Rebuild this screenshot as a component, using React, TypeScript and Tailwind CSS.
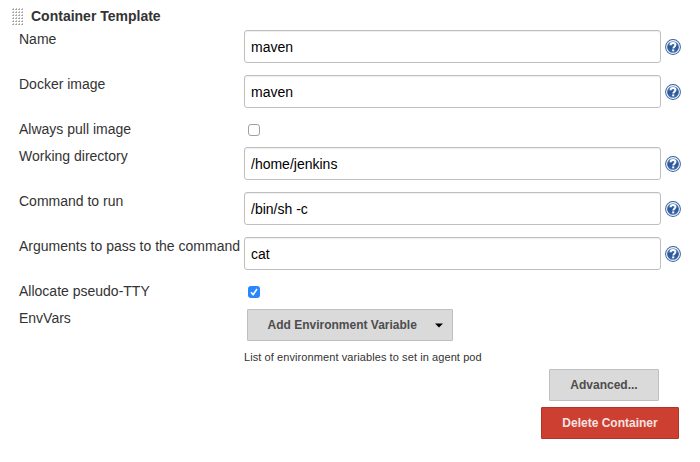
import type { ReactNode } from 'react';

function DragHandle() {
  const cols = [0, 3, 6, 9];
  const rows = [0, 3, 6, 9, 12, 15];
  return (
    <svg width="12" height="18" viewBox="0 0 12 18" shapeRendering="crispEdges" aria-hidden="true">
      {rows.map((y) =>
        cols.map((x) => (
          <g key={`${x}-${y}`}>
            <rect x={x} y={y + 1} width="2" height="1" fill="#b9b7b3" />
            <rect x={x + 1} y={y} width="1" height="1" fill="#c6c4c0" />
            <rect x={x + 1} y={y + 1} width="1" height="1" fill="#a19f9b" />
          </g>
        )),
      )}
    </svg>
  );
}

function HelpIcon() {
  return (
    <svg width="16" height="16" viewBox="0 0 16 16" className="block" role="img" aria-label="Help">
      <defs>
        <linearGradient id="help-fill" x1="0" y1="0" x2="0" y2="1">
          <stop offset="0" stopColor="#6f93c6" />
          <stop offset="0.5" stopColor="#2a5597" />
          <stop offset="1" stopColor="#3d70b4" />
        </linearGradient>
      </defs>
      <circle cx="8" cy="8" r="7.9" fill="#34609f" />
      <circle cx="8" cy="8" r="6.4" fill="url(#help-fill)" stroke="#f2f6fb" strokeWidth="1.1" />
      <path
        d="M5.6 6.3C5.6 4.8 6.6 4 8 4s2.4.8 2.4 2c0 1.6-2.1 1.8-2.1 3.4"
        fill="none"
        stroke="#fff"
        strokeWidth="1.9"
      />
      <rect x="7.2" y="10.4" width="2" height="1.9" fill="#fff" />
    </svg>
  );
}

function Row({ label, tall, children }: { label: string; tall?: boolean; children: ReactNode }) {
  return (
    <div className={`flex items-start pl-[19px] ${tall ? 'h-[45px]' : 'h-[27px]'}`}>
      <div className="w-[225px] shrink-0 whitespace-nowrap text-[14px] leading-[19px]">{label}</div>
      {children}
    </div>
  );
}

function TextRow({ label, value }: { label: string; value: string }) {
  return (
    <Row label={label} tall>
      <input
        type="text"
        aria-label={label}
        defaultValue={value}
        className="block h-[33px] w-[417px] rounded-[3px] border border-[#bfbfbf] bg-white px-[6px] text-[14px] text-black shadow-[inset_0_1px_1px_rgba(0,0,0,0.07)] outline-none"
      />
      <div className="ml-[4px] mt-[9px]">
        <HelpIcon />
      </div>
    </Row>
  );
}

function CheckRow({ label, checked }: { label: string; checked?: boolean }) {
  return (
    <Row label={label}>
      <span
        role="checkbox"
        aria-label={label}
        aria-checked={!!checked}
        className={`ml-[4px] mt-[4px] flex size-[12px] items-center justify-center rounded-[3px] ${
          checked ? 'bg-[#2a87fb]' : 'border border-[#a0a0a0] bg-white'
        }`}
      >
        {checked && (
          <svg width="12" height="12" viewBox="0 0 12 12" fill="none" stroke="#fff" strokeWidth="1.6" aria-hidden="true">
            <path d="M3 6.3 5.1 8.7 9 3" />
          </svg>
        )}
      </span>
    </Row>
  );
}

export default function App() {
  return (
    <div className="h-[462px] w-[700px] overflow-hidden bg-white font-['Liberation_Sans',Arial,sans-serif] text-[#333]">
      <div className="flex h-[30px] items-start pl-[12px] pt-[8px]">
        <DragHandle />
        <h2 className="ml-[7px] -mt-px text-[14px] font-bold leading-[18px]">Container Template</h2>
      </div>
      <TextRow label="Name" value="maven" />
      <TextRow label="Docker image" value="maven" />
      <CheckRow label="Always pull image" />
      <TextRow label="Working directory" value="/home/jenkins" />
      <TextRow label="Command to run" value="/bin/sh -c" />
      <TextRow label="Arguments to pass to the command" value="cat" />
      <CheckRow label="Allocate pseudo-TTY" checked />
      <div className="h-[60px]">
        <Row label="EnvVars">
          <div>
            <button className="ml-[3px] flex h-[32px] w-[206px] items-center rounded-[1px] border border-[#bfbfbf] bg-[#dadada] pl-[19.5px] text-[12px] font-bold text-[#4d4d4d]">
              <span className="w-[150px] whitespace-nowrap text-left">Add Environment Variable</span>
              <svg width="8" height="5" viewBox="0 0 8 5" className="ml-[17.5px]" aria-hidden="true">
                <path d="M0 .5h8L4 4.5z" fill="#000" />
              </svg>
            </button>
            <div className="mt-[9px] whitespace-nowrap text-[11px] leading-[14px] tracking-[0.085px]">
              List of environment variables to set in agent pod
            </div>
          </div>
        </Row>
      </div>
      <div className="flex flex-col items-end gap-[6px] pr-[21px]">
        <button className="mr-[20px] h-[32px] w-[110px] rounded-[1px] border border-[#bfbfbf] bg-[#dadada] text-[12px] font-bold text-[#4d4d4d]">
          Advanced...
        </button>
        <button className="h-[32px] w-[138px] rounded-[1px] border border-[#b03427] bg-[#cc3f31] text-[12px] font-bold text-[#f5e3e1]">
          Delete Container
        </button>
      </div>
    </div>
  );
}
